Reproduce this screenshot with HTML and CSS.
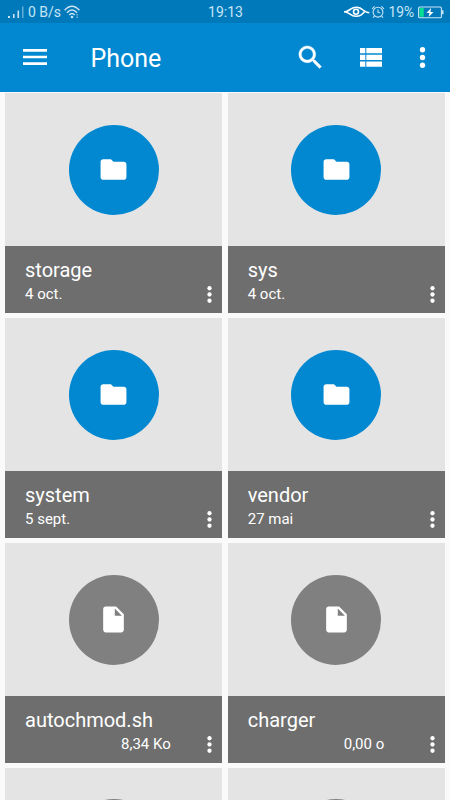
FILE: index.html
```
<!DOCTYPE html>
<html lang="fr">
<head>
    <meta charset="UTF-8">
    <title>Phone</title>
    <link rel="stylesheet" href="styles.css">
</head>
<body>
    <!-- Shared icons -->
    <svg class="sprite" width="0" height="0">
        <symbol id="folder" viewBox="0 0 24 24"><path d="M10 4H4c-1.1 0-2 .9-2 2v12c0 1.1.9 2 2 2h16c1.1 0 2-.9 2-2V8c0-1.1-.9-2-2-2h-8l-2-2z"/></symbol>
        <symbol id="file" viewBox="0 0 24 24"><path d="M6 2c-1.1 0-2 .9-2 2v16c0 1.1.9 2 2 2h12c1.1 0 2-.9 2-2V8l-6-6H6zm7 7V3.500l5.500 5.500H13z"/></symbol>
        <symbol id="more" viewBox="0 0 24 24"><circle cx="12" cy="6" r="2.050"/><circle cx="12" cy="12" r="2.050"/><circle cx="12" cy="18" r="2.050"/></symbol>
    </svg>

    <div class="status-bar">
        <div class="status-left">
            <svg width="16" height="16" viewBox="0 0 16 16">
                <path d="M0 12h2v2H0zM5 10h1.600v4H5zM9.500 6.500h1.600V14H9.500z"/>
                <path opacity=".5" d="M14 2.500h1.500V14H14z"/>
            </svg>
            <span class="speed">0 B/s</span>
            <svg class="wifi" width="16" height="14" viewBox="0 0 16 14">
                <g class="line" stroke-width="1.500">
                    <path d="M.6 5.200Q8-2.800 15.400 5.200"/>
                    <path d="M3 7.700Q8 2.300 13 7.700"/>
                    <path d="M5.300 10Q8 7 10.700 10"/>
                </g>
                <circle cx="8" cy="12" r="1.300"/>
                <path opacity=".6" d="M12.500 9h1.500v1.500h-1.500zM12.500 11.500h1.500V13h-1.500z"/>
            </svg>
        </div>
        <span class="clock">19:13</span>
        <div class="status-right">
            <svg class="eye" width="26" height="14" viewBox="0 0 26 14">
                <g class="line bright" stroke-width="1.600">
                    <path d="M0 7C3 7 4.500 5.700 6.500 4.200C10.500 1.400 15.500 1.800 19 5C21 6.700 23 7.500 25.300 7.700"/>
                    <path d="M1.500 7C5.500 7.500 6.500 11.300 12 11.300C16.500 11.300 18 9.500 20.500 6.600"/>
                    <circle cx="12" cy="6.800" r="2.500"/>
                </g>
            </svg>
            <svg class="alarm" width="14" height="14" viewBox="0 0 14 14">
                <g class="line" stroke-width="1.100">
                    <circle cx="7" cy="7.200" r="4.900"/>
                    <path d="M7 4.500v3l2.300.3M1 3.800L3.600 1.400M13 3.800L10.400 1.400M3.400 11L2 12.700M10.600 11L12 12.700"/>
                </g>
            </svg>
            <span class="percent">19%</span>
            <svg class="battery" width="26" height="13" viewBox="0 0 26 13">
                <rect class="line" x=".6" y="1" width="22.800" height="10.800" rx="1" stroke-width="1.100"/>
                <path d="M24 4.300h1.500v4H24z"/>
                <path class="charge" d="M1.500 2h4.300v8.800H1.500z"/>
                <path class="bolt" d="M13 2L8.500 7h3l-1 4L15.500 5.900h-3z"/>
            </svg>
        </div>
    </div>

    <div class="app-bar">
        <svg class="menu" viewBox="0 0 24 24"><path d="M3 18h18v-2H3v2zm0-5h18v-2H3v2zm0-7v2h18V6H3z"/></svg>
        <h1>Phone</h1>
        <svg class="search" viewBox="0 0 24 24"><path d="M15.500 14h-.79l-.28-.27C15.410 12.590 16 11.110 16 9.500 16 5.910 13.090 3 9.500 3S3 5.910 3 9.500 5.910 16 9.500 16c1.610 0 3.090-.59 4.230-1.570l.27.28v.79l5 4.990L20.490 19l-4.990-5zm-6 0C7.010 14 5 11.990 5 9.500S7.010 5 9.500 5 14 7.010 14 9.500 11.990 14 9.500 14z"/></svg>
        <svg class="view" viewBox="0 0 22 19"><path d="M0 0h5.300v5.300H0zM0 6.700h5.300V12H0zM0 13.400h5.300v5.300H0zM6.300 0H22v5.300H6.300zM6.300 6.700H22V12H6.300zM6.300 13.400H22v5.300H6.300z"/></svg>
        <svg class="overflow"><use href="#more"/></svg>
    </div>

    <div class="grid">
        <div class="tile">
            <div class="preview"><div class="circle"><svg><use href="#folder"/></svg></div></div>
            <div class="caption">
                <div class="name">storage</div>
                <div class="info">4 oct.</div>
                <svg class="more"><use href="#more"/></svg>
            </div>
        </div>
        <div class="tile">
            <div class="preview"><div class="circle"><svg><use href="#folder"/></svg></div></div>
            <div class="caption">
                <div class="name">sys</div>
                <div class="info">4 oct.</div>
                <svg class="more"><use href="#more"/></svg>
            </div>
        </div>
        <div class="tile">
            <div class="preview"><div class="circle"><svg><use href="#folder"/></svg></div></div>
            <div class="caption">
                <div class="name">system</div>
                <div class="info">5 sept.</div>
                <svg class="more"><use href="#more"/></svg>
            </div>
        </div>
        <div class="tile">
            <div class="preview"><div class="circle"><svg><use href="#folder"/></svg></div></div>
            <div class="caption">
                <div class="name">vendor</div>
                <div class="info">27 mai</div>
                <svg class="more"><use href="#more"/></svg>
            </div>
        </div>
        <div class="tile">
            <div class="preview"><div class="circle file"><svg><use href="#file"/></svg></div></div>
            <div class="caption">
                <div class="name">autochmod.sh</div>
                <div class="info size">8,34 Ko</div>
                <svg class="more"><use href="#more"/></svg>
            </div>
        </div>
        <div class="tile">
            <div class="preview"><div class="circle file"><svg><use href="#file"/></svg></div></div>
            <div class="caption">
                <div class="name">charger</div>
                <div class="info size">0,00 o</div>
                <svg class="more"><use href="#more"/></svg>
            </div>
        </div>
        <!-- Last row, only its top is visible -->
        <div class="tile cut">
            <div class="preview"><div class="circle file"></div></div>
        </div>
        <div class="tile cut">
            <div class="preview"><div class="circle file"></div></div>
        </div>
    </div>
</body>
</html>
```
FILE: styles.css
```
* {
    box-sizing: border-box;
}
body {
    margin: 0;
    height: 800px;
    overflow: hidden;
    background: #fafafa;
    font-family: Roboto, sans-serif;
    color: #fff;
}
svg {
    display: block;
    flex: none;
    fill: currentColor;
}
.sprite {
    position: absolute;
}

/* Status bar */
.status-bar {
    display: grid;
    grid-template-columns: 1fr auto 1fr;
    align-items: center;
    height: 22.5px;
    padding: 1px 7px 0 8px;
    background: #0079bb;
    color: #c9e5f5;
    font-size: 14px;
    line-height: 22px;
}
.status-left,
.status-right {
    display: flex;
    align-items: center;
}
.status-right {
    justify-content: flex-end;
}
.line {
    fill: none;
    stroke: #c9e5f5;
}
.bright {
    stroke: #fff;
}
.charge {
    fill: #08de91;
}
.bolt {
    fill: #fff;
}
.speed {
    margin-left: 4px;
}
.wifi {
    margin-left: 3px;
}
.alarm {
    margin-left: 1px;
}
.percent {
    margin-left: 3.5px;
    font-size: 13.8px;
}
.battery {
    margin-left: 4px;
    margin-right: -1px;
}

/* App bar */
.app-bar {
    display: flex;
    align-items: center;
    height: 69.5px;
    padding-left: 19px;
    background: #0288d1;
}
.app-bar h1 {
    flex: 1;
    margin: 3px 0 0 39.5px;
    font-size: 25px;
    font-weight: 400;
    line-height: 30px;
}
.menu {
    width: 32px;
    height: 32px;
}
.search,
.overflow {
    width: 31px;
    height: 31px;
}
.search {
    stroke: currentColor;
    stroke-width: 0.3;
}
.view {
    width: 22px;
    height: 19px;
    margin-left: 34.5px;
}
.overflow {
    margin: 0 12px 0 25px;
}

/* Files */
.grid {
    display: grid;
    grid-template-columns: 217.3px 217.3px;
    justify-content: space-between;
    gap: 5px;
    padding: 1.3px 5px 0;
}
.tile {
    display: flex;
    flex-direction: column;
    height: 220px;
    background: #e4e4e4;
}
.tile.cut {
    height: 31.7px;
    overflow: hidden;
}
.preview {
    display: flex;
    flex: none;
    justify-content: center;
    height: 152.5px;
    padding-top: 31.3px;
}
.cut .preview {
    padding-top: 30.6px;
}
.circle {
    display: flex;
    align-items: center;
    justify-content: center;
    width: 90px;
    height: 90px;
    border-radius: 50%;
    background: #0288d1;
}
.circle.file {
    background: #808080;
}
.circle svg {
    width: 31px;
    height: 31px;
}
.caption {
    position: relative;
    flex: 1;
    padding: 12px 20px 0;
    background: #6e6e6e;
}
.name {
    font-size: 20px;
    line-height: 24px;
}
.info {
    font-size: 15px;
    line-height: 24px;
}
.info.size {
    padding-left: 96px;
}
.more {
    position: absolute;
    right: 0;
    bottom: 6px;
    width: 25px;
    height: 25px;
}
```
